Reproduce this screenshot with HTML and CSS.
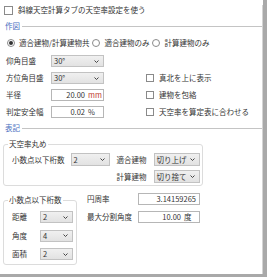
FILE: index.html
```html
<!DOCTYPE html>
<html lang="ja">
<head>
    <meta charset="UTF-8">
    <title>天空率設定</title>
    <link rel="stylesheet" href="styles.css">
</head>
<body>
<div class="window">
    <div class="panel">

        <label class="check top"><span class="box"></span>斜線天空計算タブの天空率設定を使う</label>

        <!-- 作図 -->
        <div class="section sec-draw"><span>作図</span></div>

        <div class="radios">
            <label class="radio"><span class="dot on"></span>適合建物/計算建物共</label>
            <label class="radio"><span class="dot"></span>適合建物のみ</label>
            <label class="radio"><span class="dot"></span>計算建物のみ</label>
        </div>

        <div class="form">
            <span class="label">仰角目盛</span>
            <div class="select"><span>30°</span><svg class="chev" width="5" height="3" viewBox="0 0 5 3"><path d="M0.5 0.5 L2.5 2.5 L4.5 0.5" fill="none" stroke="#444" stroke-width="1"/></svg></div>
            <span></span>

            <span class="label">方位角目盛</span>
            <div class="select"><span>30°</span><svg class="chev" width="5" height="3" viewBox="0 0 5 3"><path d="M0.5 0.5 L2.5 2.5 L4.5 0.5" fill="none" stroke="#444" stroke-width="1"/></svg></div>
            <label class="check side"><span class="box"></span>真北を上に表示</label>

            <span class="label">半径</span>
            <div class="input"><span>20.00</span><span class="unit red">mm</span></div>
            <label class="check side"><span class="box"></span>建物を包絡</label>

            <span class="label">判定安全幅</span>
            <div class="input"><span>0.02</span><span class="unit">%</span></div>
            <label class="check side"><span class="box"></span>天空率を算定表に合わせる</label>
        </div>

        <!-- 表記 -->
        <div class="section sec-note"><span>表記</span></div>

        <fieldset class="group round">
            <legend>天空率丸め</legend>
            <div class="round-body">
                <div class="pair">
                    <span class="label">小数点以下桁数</span>
                    <div class="select w-digits"><span>2</span><svg class="chev" width="5" height="3" viewBox="0 0 5 3"><path d="M0.5 0.5 L2.5 2.5 L4.5 0.5" fill="none" stroke="#444" stroke-width="1"/></svg></div>
                </div>
                <div class="round-grid">
                    <span class="label">適合建物</span>
                    <div class="select w-mode"><span>切り上げ</span><svg class="chev" width="5" height="3" viewBox="0 0 5 3"><path d="M0.5 0.5 L2.5 2.5 L4.5 0.5" fill="none" stroke="#444" stroke-width="1"/></svg></div>
                    <span class="label">計算建物</span>
                    <div class="select w-mode"><span>切り捨て</span><svg class="chev" width="5" height="3" viewBox="0 0 5 3"><path d="M0.5 0.5 L2.5 2.5 L4.5 0.5" fill="none" stroke="#444" stroke-width="1"/></svg></div>
                </div>
            </div>
        </fieldset>

        <div class="bottom">
            <fieldset class="group digits">
                <legend>小数点以下桁数</legend>
                <div class="digits-grid">
                    <span class="label">距離</span>
                    <div class="select w-small"><span>2</span><svg class="chev" width="5" height="3" viewBox="0 0 5 3"><path d="M0.5 0.5 L2.5 2.5 L4.5 0.5" fill="none" stroke="#444" stroke-width="1"/></svg></div>
                    <span class="label">角度</span>
                    <div class="select w-small"><span>4</span><svg class="chev" width="5" height="3" viewBox="0 0 5 3"><path d="M0.5 0.5 L2.5 2.5 L4.5 0.5" fill="none" stroke="#444" stroke-width="1"/></svg></div>
                    <span class="label">面積</span>
                    <div class="select w-small"><span>2</span><svg class="chev" width="5" height="3" viewBox="0 0 5 3"><path d="M0.5 0.5 L2.5 2.5 L4.5 0.5" fill="none" stroke="#444" stroke-width="1"/></svg></div>
                </div>
            </fieldset>

            <div class="extra">
                <span class="label">円周率</span>
                <div class="input"><span>3.14159265</span></div>
                <span class="label">最大分割角度</span>
                <div class="input"><span>10.00</span><span class="unit">度</span></div>
            </div>
        </div>

    </div>
</div>
</body>
</html>
```

FILE: styles.css
```css
* {
    box-sizing: border-box;
}

body {
    margin: 0;
    font-family: "Noto Sans CJK JP", "Noto Sans", sans-serif;
    font-size: 7.5px;
    line-height: 10px;
    color: #333;
    background: #fff;
}

.window {
    width: 267px;
    height: 277px;
    border-right: 4px solid #a9a9a9;
    border-bottom: 3px solid #a9a9a9;
    overflow: hidden;
}

.panel {
    height: 100%;
    border-right: 1px solid #d4d4d4;
}

/* checkbox / radio */

.check {
    display: flex;
    align-items: center;
    height: 10px;
    white-space: nowrap;
}

.box {
    display: inline-block;
    width: 8px;
    height: 8px;
    border: 1px solid #8a8a8a;
    background: #fff;
    margin-right: 5px;
    flex: none;
}

.top {
    margin: 5px 0 0 4px;
}

.top .box {
    width: 9px;
    height: 9px;
}

.radios {
    display: flex;
    gap: 3px;
    height: 10px;
    margin: 7px 0 0 7px;
    white-space: nowrap;
}

.radio {
    display: flex;
    align-items: center;
}

.dot {
    width: 8px;
    height: 8px;
    border: 1px solid #8a8a8a;
    border-radius: 50%;
    margin-right: 4px;
    display: flex;
    align-items: center;
    justify-content: center;
    flex: none;
}

.dot.on::after {
    content: "";
    width: 4px;
    height: 4px;
    border-radius: 50%;
    background: #333;
}

/* section headers */

.section {
    display: flex;
    align-items: center;
    gap: 2px;
    height: 10px;
    padding-left: 5px;
    color: #4a6fbf;
}

.section::after {
    content: "";
    flex: 1;
    border-top: 1px solid #c4c4c4;
}

.sec-draw {
    margin-top: 6px;
}

.sec-note {
    margin-top: 5px;
}

/* controls */

.label {
    white-space: nowrap;
    align-self: center;
}

.select {
    display: flex;
    align-items: center;
    justify-content: space-between;
    height: 12px;
    padding: 0 4px 0 2px;
    border: 1px solid #c2c2c2;
    background: linear-gradient(#f0f0f0, #e2e2e2);
    white-space: nowrap;
}

.chev {
    flex: none;
}

.input {
    display: flex;
    align-items: center;
    justify-content: flex-end;
    gap: 3px;
    height: 12px;
    padding: 0 3px;
    border: 1px solid #b6b6b6;
    background: #fff;
    white-space: nowrap;
}

.unit {
    width: 12px;
}

.red {
    color: #c0392b;
}

.form {
    display: grid;
    grid-template-columns: 45px 53px 1fr;
    grid-template-rows: repeat(4, 12px);
    row-gap: 5px;
    margin: 7px 0 0 6px;
}

.side {
    align-self: center;
    margin-left: 42px;
}

/* group boxes */

.group {
    margin: 0;
    padding: 0;
    border: 1px solid #dcdcdc;
    border-radius: 3px;
    min-width: 0;
}

.group legend {
    margin-left: 4px;
    padding: 0 1px;
    line-height: 10px;
}

.round {
    width: 200px;
    margin: 6px 0 0 3px;
}

.round-body {
    display: flex;
    align-items: flex-start;
    padding: 4px 0 2px 8px;
}

.pair {
    display: flex;
    align-items: center;
    gap: 6px;
    height: 13px;
}

.round-grid {
    display: grid;
    grid-template-columns: 37px 46px;
    grid-template-rows: 13px 13px;
    row-gap: 4px;
    margin-left: 7px;
}

.round-grid .select,
.pair .select {
    height: 13px;
}

.w-digits {
    width: 39px;
}

.bottom {
    display: flex;
    align-items: flex-start;
    margin: 9px 0 0 3px;
}

.digits {
    width: 74px;
}

.digits-grid {
    display: grid;
    grid-template-columns: 28px 33px;
    grid-template-rows: repeat(3, 12px);
    row-gap: 6.5px;
    padding: 6px 0 4px 8px;
}

.extra {
    display: grid;
    grid-template-columns: 51px 62px;
    grid-template-rows: 12px 12px;
    row-gap: 6px;
    margin: -2px 0 0 10px;
}
```
